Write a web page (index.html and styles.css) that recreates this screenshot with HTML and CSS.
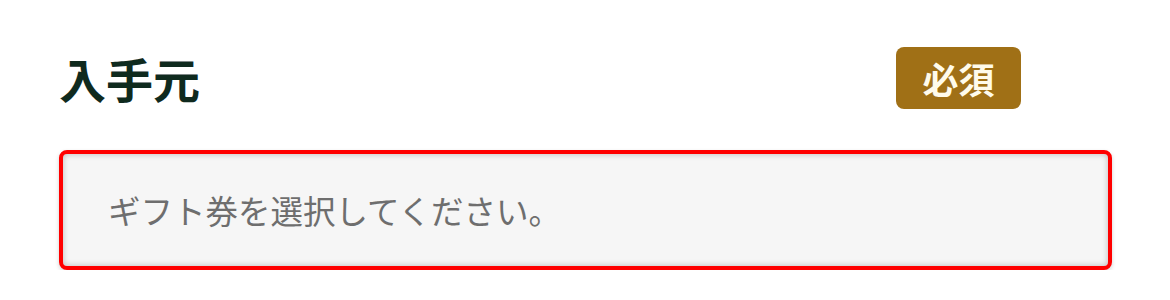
FILE: index.html
```html
<!DOCTYPE html>
<html lang="ja">
<head>
<meta charset="utf-8">
<link rel="stylesheet" href="styles.css">
</head>
<body>
<div class="field">
  <div class="field-head">
    <h2 class="label">入手元</h2>
    <span class="badge">必須</span>
  </div>
  <div class="select">ギフト券を選択してください。</div>
</div>
</body>
</html>
```
FILE: styles.css
```css
html, body {
  margin: 0;
  padding: 0;
  background: #ffffff;
  font-family: "Noto Sans CJK JP", "Noto Sans", sans-serif;
}
.field {
  padding: 47px 58px 0 59px;
}
.field-head {
  display: flex;
  align-items: center;
  justify-content: space-between;
  padding-right: 91px;
  height: 62px;
}
.label {
  margin: 0;
  font-size: 47px;
  font-weight: 700;
  color: #0f2a1e;
  line-height: 1;
  padding-left: 0;
  margin-top: -2px;
}
.badge {
  display: flex;
  align-items: center;
  justify-content: center;
  width: 125px;
  height: 62px;
  background: #a07016;
  color: #fffbeb;
  font-size: 36px;
  font-weight: 700;
  border-radius: 8px;
  line-height: 1;
}
.select {
  margin-top: 41px;
  height: 112px;
  box-sizing: content-box;
  border: 4px solid #ff0000;
  border-radius: 8px;
  background: #f6f6f6;
  box-shadow: inset 0 0 6px rgba(0,0,0,0.25), 0 2px 4px rgba(0,0,0,0.18);
  display: flex;
  align-items: center;
  padding-left: 45px;
  font-size: 32.5px;
  color: #6e6e6e;
  line-height: 1;
}
```
